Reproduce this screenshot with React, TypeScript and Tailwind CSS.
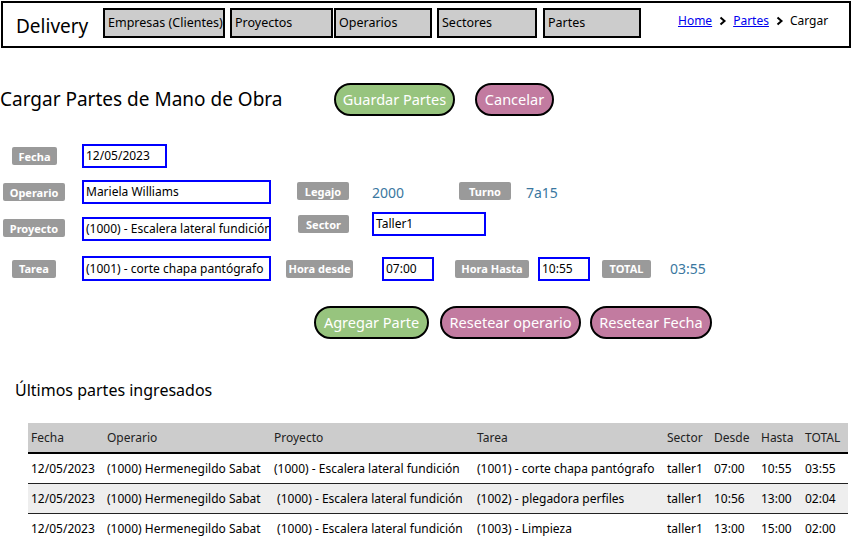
import React from "react";

const NAV = [
  { label: "Empresas (Clientes)", w: "w-[122px]", ml: "ml-0" },
  { label: "Proyectos", w: "w-[103px]", ml: "ml-[5px]" },
  { label: "Operarios", w: "w-[98px]", ml: "ml-[1px]" },
  { label: "Sectores", w: "w-[100px]", ml: "ml-[5px]" },
  { label: "Partes", w: "w-[98px]", ml: "ml-[6px]" },
];

const ROWS = [
  {
    fecha: "12/05/2023",
    operario: "(1000) Hermenegildo Sabat",
    proyecto: "(1000) - Escalera lateral fundición",
    tarea: "(1001) - corte chapa pantógrafo",
    sector: "taller1",
    desde: "07:00",
    hasta: "10:55",
    total: "03:55",
  },
  {
    fecha: "12/05/2023",
    operario: "(1000) Hermenegildo Sabat",
    proyecto: " (1000) - Escalera lateral fundición",
    tarea: "(1002) - plegadora perfiles",
    sector: "taller1",
    desde: "10:56",
    hasta: "13:00",
    total: "02:04",
  },
  {
    fecha: "12/05/2023",
    operario: "(1000) Hermenegildo Sabat",
    proyecto: " (1000) - Escalera lateral fundición",
    tarea: "(1003) - Limpieza",
    sector: "taller1",
    desde: "13:00",
    hasta: "15:00",
    total: "02:00",
  },
];

const Chevron = () => (
  <svg width="9" height="10" viewBox="0 0 9 10" className="mx-[6px]">
    <path d="M2.5 1.5 L6.5 5 L2.5 8.5" fill="none" stroke="#000" strokeWidth="2" />
  </svg>
);

const Tag = ({ text, className }: { text: string; className: string }) => (
  <div
    className={`h-[18px] bg-[#9a9a9a] rounded-[2px] text-white text-[11px] font-bold flex items-center justify-center leading-none shrink-0 ${className}`}
  >
    {text}
  </div>
);

const Field = ({ value, className }: { value: string; className: string }) => (
  <div
    className={`border-2 border-[#0000ff] text-[12px] text-black flex items-center pl-[2px] overflow-hidden whitespace-nowrap shrink-0 ${className}`}
  >
    {value}
  </div>
);

const Pill = ({ text, className }: { text: string; className: string }) => (
  <button
    className={`h-[33px] rounded-full border-2 border-black text-white text-[14.5px] flex items-center justify-center shrink-0 ${className}`}
  >
    {text}
  </button>
);

const App = () => {
  return (
    <div
      className="w-[857px] h-[550px] bg-white overflow-hidden text-black"
      style={{ fontFamily: '"Noto Sans", "Open Sans", sans-serif' }}
    >
      {/* header */}
      <header className="ml-[1px] mt-[1px] w-[850px] h-[47px] border-2 border-black flex items-start">
        <div className="w-[100px] pl-[13px] pt-[10px] text-[19px] leading-[26px]">Delivery</div>
        <nav className="flex pt-[5px]">
          {NAV.map((n) => (
            <div
              key={n.label}
              className={`${n.w} ${n.ml} h-[30px] bg-[#cccccc] border-2 border-black text-[12.5px] flex items-center pl-[3px] whitespace-nowrap`}
            >
              {n.label}
            </div>
          ))}
        </nav>
        <div className="ml-[37px] pt-[9px] flex items-center text-[12px] leading-[18px]">
          <a href="#" className="text-[#0000ee] underline">Home</a>
          <Chevron />
          <a href="#" className="text-[#0000ee] underline">Partes</a>
          <Chevron />
          <span>Cargar</span>
        </div>
      </header>

      {/* title */}
      <div className="mt-[35px] h-[33px] flex items-center">
        <h1 className="w-[334px] text-[19px]">Cargar Partes de Mano de Obra</h1>
        <Pill text="Guardar Partes" className="w-[121px] bg-[#97c47e]" />
        <Pill text="Cancelar" className="w-[79px] ml-[20px] bg-[#c27ba0]" />
      </div>

      {/* form */}
      <div className="mt-[28px] h-[24px] flex items-center">
        <Tag text="Fecha" className="ml-[12px] w-[45px]" />
        <Field value="12/05/2023" className="ml-[25px] w-[85px] h-[24px]" />
      </div>

      <div className="mt-[12px] h-[24px] flex items-center">
        <Tag text="Operario" className="ml-[3px] w-[62px]" />
        <Field value="Mariela Williams" className="ml-[17px] w-[189px] h-[24px]" />
        <Tag text="Legajo" className="ml-[26px] w-[52px] -mt-[2px]" />
        <span className="ml-[23px] w-[87px] text-[14px] text-[#3a77a0]">2000</span>
        <Tag text="Turno" className="w-[52px] -mt-[2px]" />
        <span className="ml-[15px] text-[14px] text-[#3a77a0]">7a15</span>
      </div>

      <div className="mt-[8px] h-[29px] flex items-start">
        <Tag text="Proyecto" className="ml-[3px] w-[62px] mt-[7px]" />
        <Field
          value="(1000) - Escalera lateral fundición"
          className="ml-[17px] w-[189px] h-[24px] mt-[5px]"
        />
        <Tag text="Sector" className="ml-[27px] w-[51px] mt-[3px]" />
        <Field value="Taller1" className="ml-[23px] w-[114px] h-[24px]" />
      </div>

      <div className="mt-[15px] h-[25px] flex items-center">
        <Tag text="Tarea" className="ml-[12px] w-[44px]" />
        <Field value="(1001) - corte chapa pantógrafo" className="ml-[26px] w-[189px] h-[25px]" />
        <Tag text="Hora desde" className="ml-[15px] w-[67px]" />
        <Field value="07:00" className="ml-[29px] w-[52px] h-[24px]" />
        <Tag text="Hora Hasta" className="ml-[21px] w-[74px]" />
        <Field value="10:55" className="ml-[9px] w-[52px] h-[24px]" />
        <Tag text="TOTAL" className="ml-[12px] w-[49px]" />
        <span className="ml-[19px] text-[14px] text-[#3a77a0]">03:55</span>
      </div>

      {/* actions */}
      <div className="mt-[25px] h-[33px] flex items-center">
        <Pill text="Agregar Parte" className="ml-[314px] w-[115px] bg-[#97c47e]" />
        <Pill text="Resetear operario" className="ml-[11px] w-[141px] bg-[#c27ba0]" />
        <Pill text="Resetear Fecha" className="ml-[9px] w-[122px] bg-[#c27ba0]" />
      </div>

      {/* table */}
      <h2 className="mt-[39px] ml-[15px] text-[16px] leading-[24px]">Últimos partes ingresados</h2>

      <div className="mt-[21px] ml-[28px] w-[820px] text-[12px]">
        <div className="grid grid-cols-[76px_167px_203px_190px_47px_47px_44px_46px] h-[31px] items-center bg-[#cccccc] border-b-2 border-black text-[#222]">
          {["Fecha", "Operario", "Proyecto", "Tarea", "Sector", "Desde", "Hasta", "TOTAL"].map((h) => (
            <div key={h} className="pl-[3px] whitespace-nowrap">
              {h}
            </div>
          ))}
        </div>
        {ROWS.map((r, i) => (
          <div
            key={i}
            className={`grid grid-cols-[76px_167px_203px_190px_47px_47px_44px_46px] h-[30px] items-center whitespace-pre ${
              i === 1 ? "bg-[#eeeeee]" : "bg-white"
            } ${i < ROWS.length - 1 ? "border-b border-[#222]" : ""}`}
          >
            <div className="pl-[3px]">{r.fecha}</div>
            <div className="pl-[3px]">{r.operario}</div>
            <div className="pl-[3px]">{r.proyecto}</div>
            <div className="pl-[3px]">{r.tarea}</div>
            <div className="pl-[3px]">{r.sector}</div>
            <div className="pl-[3px]">{r.desde}</div>
            <div className="pl-[3px]">{r.hasta}</div>
            <div className="pl-[3px]">{r.total}</div>
          </div>
        ))}
      </div>
    </div>
  );
};

export default App;
